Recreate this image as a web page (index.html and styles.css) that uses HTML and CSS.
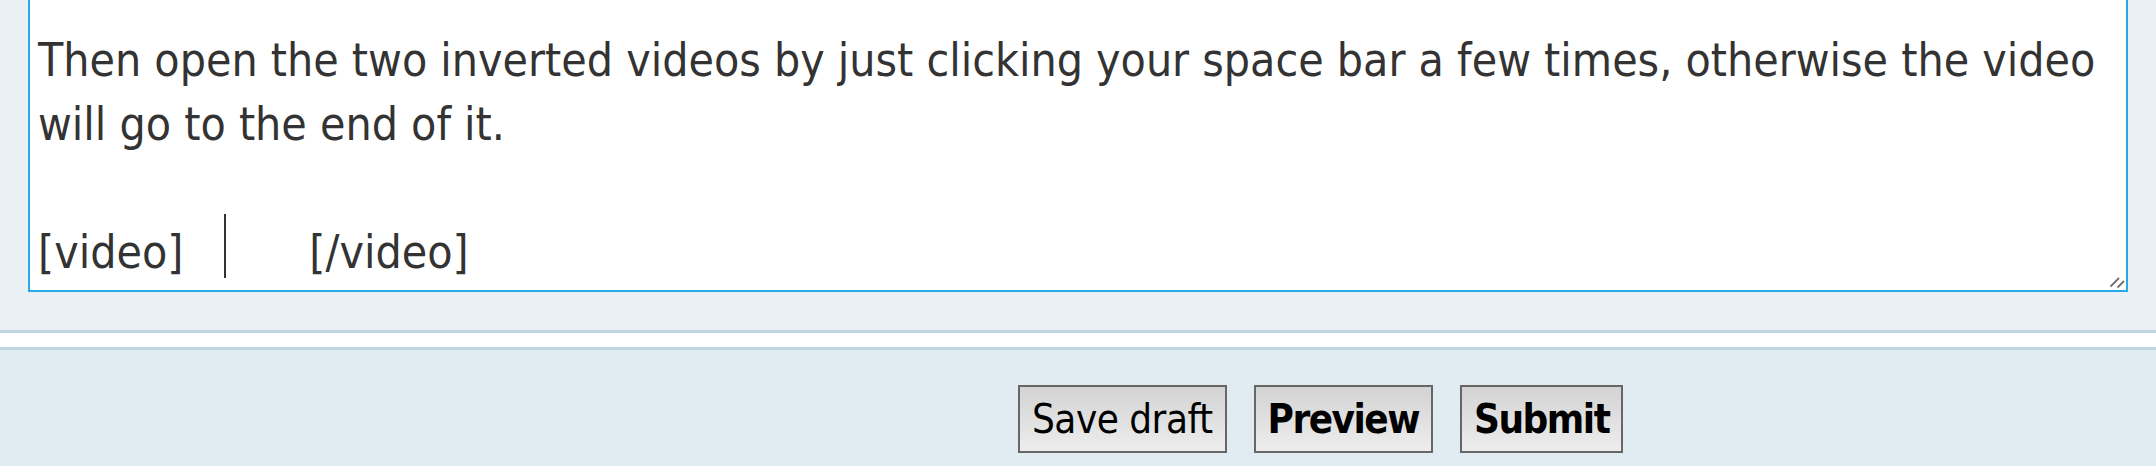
FILE: index.html
```html
<!DOCTYPE html>
<html lang="en">
<head>
<meta charset="utf-8">
<title>Reply</title>
<link rel="stylesheet" href="styles.css">
</head>
<body>
<div class="editor">
  <div class="textbox">
    <div class="line">Then open the two inverted videos by just clicking your space bar a few times, otherwise the video</div>
    <div class="line">will go to the end of it.</div>
    <div class="line"></div>
    <div class="line">[video]<span class="caret"></span>[/video]</div>
    <svg class="grip" width="16" height="16" viewBox="0 0 16 16" aria-hidden="true">
      <line x1="0.5" y1="12.5" x2="9" y2="4" stroke="#6e6e6e" stroke-width="1.8"/>
      <line x1="7.5" y1="13.5" x2="14" y2="7" stroke="#6e6e6e" stroke-width="1.8"/>
    </svg>
  </div>
</div>
<div class="divider"></div>
<div class="actions">
  <button class="btn" type="button">Save draft</button>
  <button class="btn btn-strong" type="button">Preview</button>
  <button class="btn btn-strong" type="button">Submit</button>
</div>
</body>
</html>
```
FILE: styles.css
```css
html, body {
  margin: 0;
  padding: 0;
}
body {
  background: #eaf0f4;
  font-family: "DejaVu Sans Condensed", "DejaVu Sans", sans-serif;
  overflow: hidden;
}
.editor {
  padding: 0 28px 38px;
}
.textbox {
  position: relative;
  margin-top: -10px;
  border: 2px solid #27a8e7;
  background: #fff;
  padding: 36px 8px 6px;
  font-size: 46px;
  line-height: 64px;
  color: #333;
}
.line {
  height: 64px;
  white-space: nowrap;
}
.caret {
  display: inline-block;
  width: 2px;
  height: 64px;
  margin: -6px 83px 0 41px;
  vertical-align: top;
  background: #333;
}
.grip {
  position: absolute;
  right: 0;
  bottom: 0;
}
.divider {
  height: 14px;
  background: #fff;
  border-top: 3px solid #c1d6e3;
  border-bottom: 3px solid #c1d6e3;
}
.actions {
  background: #e0ebf2;
  min-height: 116px;
  box-sizing: border-box;
  padding: 35px 0 0 1018px;
  display: flex;
  align-items: flex-start;
  gap: 27px;
}
.btn {
  height: 68px;
  padding: 0 12px;
  border: 2px solid #666;
  border-radius: 0;
  background: linear-gradient(#d3d3d3, #ededed);
  font-family: "DejaVu Sans Condensed", "DejaVu Sans", sans-serif;
  font-size: 40px;
  letter-spacing: -0.5px;
  color: #000;
  font-weight: normal;
}
.btn-strong {
  font-weight: bold;
  letter-spacing: -1.5px;
}
```
